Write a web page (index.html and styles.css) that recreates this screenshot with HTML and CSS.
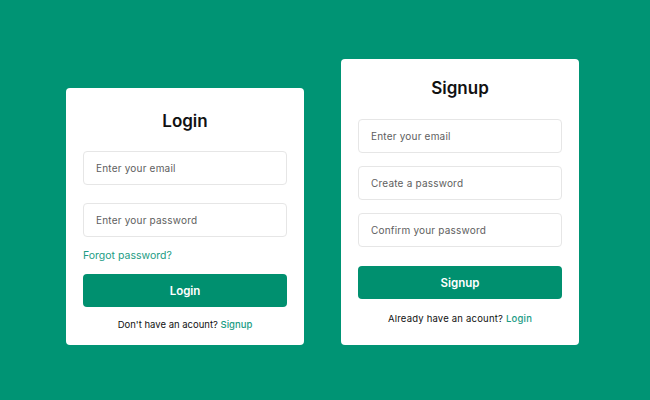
FILE: index.html
```html
<!DOCTYPE html>
<html lang="en">
<head>
<meta charset="utf-8">
<title>Login &amp; Signup</title>
<link rel="stylesheet" href="styles.css">
</head>
<body>
  <main class="stage">
    <section class="card card--login">
      <h1 class="card__title">Login</h1>
      <form class="form form--login">
        <input class="field" type="email" placeholder="Enter your email">
        <input class="field" type="password" placeholder="Enter your password">
        <a class="forgot" href="#">Forgot password?</a>
        <button class="btn" type="button">Login</button>
      </form>
      <p class="switch">Don't have an acount? <a href="#">Signup</a></p>
    </section>

    <section class="card card--signup">
      <h1 class="card__title">Signup</h1>
      <form class="form form--signup">
        <input class="field" type="email" placeholder="Enter your email">
        <input class="field" type="password" placeholder="Create a password">
        <input class="field" type="password" placeholder="Confirm your password">
        <button class="btn" type="button">Signup</button>
      </form>
      <p class="switch">Already have an acount? <a href="#">Login</a></p>
    </section>
  </main>
</body>
</html>
```

FILE: styles.css
```css
* {
  box-sizing: border-box;
}

html, body {
  margin: 0;
  height: 100%;
}

body {
  background: #009474;
  font-family: "Inter", "Open Sans", sans-serif;
  color: #111;
}

.stage {
  height: 400px;
  display: flex;
  justify-content: center;
  align-items: flex-end;
  gap: 37px;
  padding: 0 5px 55px 0;
}

.card {
  width: 238px;
  background: #fff;
  border-radius: 4px;
  padding: 0 17px;
  display: flex;
  flex-direction: column;
}

.card--login {
  padding-top: 21px;
  padding-bottom: 13px;
}

.card--signup {
  padding-top: 17px;
  padding-bottom: 19px;
}

.card__title {
  margin: 0;
  font-size: 17px;
  line-height: 24px;
  font-weight: 600;
  text-align: center;
}

.card--login .card__title {
  margin-bottom: 18px;
}

.card--signup .card__title {
  margin-bottom: 19px;
}

.form {
  display: flex;
  flex-direction: column;
}

.form--login {
  gap: 18px;
}

.form--signup {
  gap: 13px;
}

.field {
  width: 100%;
  height: 34px;
  border: 1px solid #e6e6e6;
  border-radius: 4px;
  padding: 0 12px;
  font-family: inherit;
  font-size: 10px;
  letter-spacing: 0.2px;
  color: #333;
  outline: none;
}

.field::placeholder {
  color: #5e5e5e;
}

.forgot {
  margin-top: -6px;
  font-size: 10.5px;
  line-height: 14px;
  color: #1c9c84;
  text-decoration: none;
}

.form--login .btn {
  margin-top: -7px;
}

.form--signup .btn {
  margin-top: 6px;
}

.btn {
  height: 33px;
  border: none;
  border-radius: 4px;
  background: #00906f;
  color: #fff;
  font-family: inherit;
  font-size: 11.5px;
  font-weight: 600;
  cursor: pointer;
}

.switch {
  margin: 11px 0 0;
  font-size: 9.5px;
  line-height: 14px;
  text-align: center;
  color: #111;
}

.card--signup .switch {
  margin-top: 13px;
  letter-spacing: 0.2px;
}

.switch a {
  color: #1c9c84;
  font-weight: 500;
  text-decoration: none;
}
```
